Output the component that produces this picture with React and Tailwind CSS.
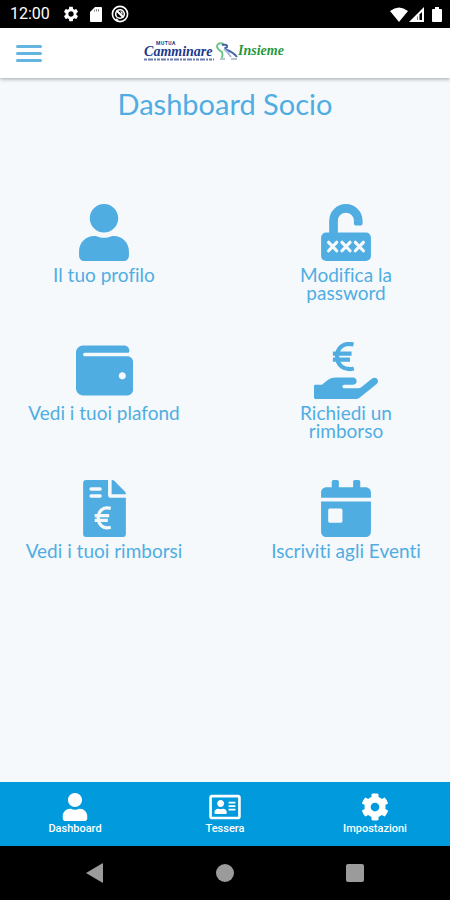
import { FaUser, FaWallet, FaCalendarDay, FaRegAddressCard, FaCog } from "react-icons/fa";
import { MdSettings } from "react-icons/md";

function UnlockPassword() {
  return (
    <svg viewBox="0 0 448 512" className="h-[57px] w-[50px]" aria-hidden="true">
      <path d="M112 280V150a111 111 0 0 1 222 0" fill="none" stroke="currentColor" strokeWidth="78" />
      <path d="M295 145h78v25q0 24-24 24h-30q-24 0-24-24z" fill="currentColor" />
      <rect y="256" width="448" height="256" rx="46" fill="currentColor" />
      <path
        d="M68 344l72 76m0-76l-72 76M188 344l72 76m0-76l-72 76M308 344l72 76m0-76l-72 76"
        stroke="#f5f9fc"
        strokeWidth="29"
        strokeLinecap="round"
      />
    </svg>
  );
}

function HandHoldingEuro() {
  return (
    <svg viewBox="0 0 576 512" className="h-[57px] w-16" aria-hidden="true" fill="currentColor">
      <path d="M565.3 328.1c-11.8-10.7-30.2-10-42.6 0L430.3 402c-11.3 9.1-25.4 14-40 14H272c-8.8 0-16-7.2-16-16s7.2-16 16-16h78.3c15.9 0 30.7-10.9 33.3-26.6 3.3-20-12.1-37.4-31.6-37.4H192c-27 0-53.1 9.3-74.1 26.3L71.4 384H12c-6 0-12 6-12 12v104c0 6 6 12 12 12h360.8c14.5 0 28.6-4.9 40-14L564 377c15.2-12.1 16.4-35.3 1.3-48.9z" />
      <path
        d="M356 22C264 0 208 54 208 130s60 130 150 108M170 104h168M170 158h154"
        fill="none"
        stroke="currentColor"
        strokeWidth="38"
      />
    </svg>
  );
}

function InvoiceEuro() {
  return (
    <svg viewBox="0 0 384 512" className="h-[57px] w-[43px]" aria-hidden="true" fill="currentColor">
      <path d="M24 0h200v136c0 13 11 24 24 24h136v328c0 13-11 24-24 24H24c-13 0-24-11-24-24V24C0 11 11 0 24 0z" />
      <path d="M256 0h6c7 0 13 3 17 7l98 98c4 4 7 10 7 17v6H256z" />
      <path d="M72 80h80M72 144h80" stroke="#f5f9fc" strokeWidth="32" strokeLinecap="round" />
      <path
        d="M248 255c-68-20-112 22-112 85s44 103 112 85M104 320h130M104 362h118"
        fill="none"
        stroke="#f5f9fc"
        strokeWidth="29"
      />
    </svg>
  );
}

const tiles = [
  { icon: <FaUser className="h-[57px] w-[50px]" />, lines: ["Il tuo profilo"] },
  { icon: <UnlockPassword />, lines: ["Modifica la", "password"] },
  { icon: <FaWallet className="size-[57px]" />, lines: ["Vedi i tuoi plafond"] },
  { icon: <HandHoldingEuro />, lines: ["Richiedi un", "rimborso"] },
  { icon: <InvoiceEuro />, lines: ["Vedi i tuoi rimborsi"] },
  { icon: <FaCalendarDay className="h-[57px] w-[50px]" />, lines: ["Iscriviti agli Eventi"] },
];

const tabs = [
  { icon: <FaUser className="size-7" />, label: "Dashboard" },
  { icon: <FaRegAddressCard className="h-7 w-8" />, label: "Tessera" },
  { icon: <FaCog className="size-7" />, label: "Impostazioni" },
];

function StatusBar() {
  return (
    <div className="flex h-7 shrink-0 items-center bg-black pr-2 pl-[10px] text-white">
      <span className="font-[Roboto,sans-serif] text-base">12:00</span>
      <MdSettings className="ml-3 size-[18px]" aria-hidden="true" />
      <svg viewBox="0 0 12 15" className="ml-[10px] h-[15px] w-3" fill="currentColor" aria-hidden="true">
        <path d="M5 0h6a1 1 0 0 1 1 1v13a1 1 0 0 1-1 1H1a1 1 0 0 1-1-1V5z" />
        <path d="M4.5 2.5v2M6.500 2v2.500M8.500 2v2.500" stroke="#888" strokeWidth="1" />
      </svg>
      <svg viewBox="0 0 18 18" className="ml-[9px] size-[18px]" fill="none" stroke="currentColor" aria-hidden="true">
        <circle cx="9" cy="9" r="7.6" strokeWidth="1.6" />
        <circle cx="9" cy="9" r="4.3" strokeWidth="1.6" />
        <path d="M5.5 5.5l7 7M5 14l2 2" strokeWidth="2" />
        <path d="M9 6.5h2.5V10z" fill="currentColor" stroke="none" />
      </svg>
      <svg viewBox="0 0 18 15" className="ml-auto h-[15px] w-[18px]" fill="currentColor" aria-hidden="true">
        <path d="M9 15L0 4q9-7 18 0z" />
      </svg>
      <svg viewBox="0 0 15 15" className="ml-px h-[15px] w-[15px]" aria-hidden="true">
        <path d="M15 0v15H0z" fill="currentColor" />
        <path d="M13 5v8H8V10z" fill="#000" />
        <path d="M9.500 8v6" stroke="#fff" strokeWidth="2" />
      </svg>
      <svg viewBox="0 0 10 15" className="ml-2 h-[15px] w-[10px]" fill="currentColor" aria-hidden="true">
        <path d="M3 0h4v2h2q1 0 1 1v11q0 1-1 1H1q-1 0-1-1V3q0-1 1-1h2z" />
      </svg>
    </div>
  );
}

function Logo() {
  return (
    <div className="flex items-center">
      <div className="flex w-[70px] flex-col text-[#20388a]">
        <span className="pl-3 font-[Roboto,sans-serif] text-[5px] leading-[5px] font-bold tracking-widest">MUTUA</span>
        <span className="font-['Liberation_Serif',serif] text-[14px] leading-3 font-bold italic">Camminare</span>
        <svg viewBox="0 0 70 3" className="h-[3px] w-[70px]" aria-hidden="true">
          <path d="M0 1.500h70" stroke="currentColor" strokeWidth="2" strokeDasharray="3 1 5 1 2 1" opacity=".65" />
        </svg>
      </div>
      <svg viewBox="0 0 24 20" className="h-5 w-6" fill="none" aria-hidden="true">
        <path d="M10 3Q4 1 3 5Q3 8 8 11Q9 14 8 17" stroke="#6fc487" strokeWidth="2" />
        <path d="M8 4Q14 3 13 6Q9 7 13 9Q19 11 23 16" stroke="#4967a8" strokeWidth="2" />
        <path d="M10 8Q14 11 17 16" stroke="#a9badb" strokeWidth="2" />
        <path d="M6 18h5m6 0h6" stroke="#b9c6cd" strokeWidth="2" />
      </svg>
      <span className="font-['Liberation_Serif',serif] text-[14px] leading-4 font-bold text-[#28973c] italic">
        Insieme
      </span>
    </div>
  );
}

export default function App() {
  return (
    <div className="flex min-h-screen flex-col bg-[#f5f9fc] font-[Lato,sans-serif] text-[#50ade2] [font-variant-ligatures:none]">
      <StatusBar />
      <header className="grid h-[50px] shrink-0 grid-cols-[1fr_auto_1fr] items-center bg-white px-4 shadow-[0_1px_4px_rgba(0,0,0,0.35)]">
        <button type="button" aria-label="Menu" className="flex w-[26px] flex-col gap-1">
          <span className="h-[3px] rounded-full bg-[#65b5e2]" />
          <span className="h-[3px] rounded-full bg-[#65b5e2]" />
          <span className="h-[3px] rounded-full bg-[#65b5e2]" />
        </button>
        <div className="pr-[22px] pb-1">
          <Logo />
        </div>
      </header>
      <main className="flex-1">
        <h1 className="pt-2 text-center text-[29px] leading-9 font-normal">Dashboard Socio</h1>
        <div className="mt-[82px] grid grid-cols-[160px_160px] justify-between gap-y-[38px] px-6">
          {tiles.map((tile) => (
            <button
              type="button"
              key={tile.lines[0]}
              className="flex min-h-[100px] flex-col items-center justify-start gap-[5px] text-[19px] leading-[18px]"
            >
              {tile.icon}
              <span className="flex flex-col whitespace-nowrap">
                {tile.lines.map((line) => (
                  <span key={line}>{line}</span>
                ))}
              </span>
            </button>
          ))}
        </div>
      </main>
      <nav className="grid h-16 shrink-0 grid-cols-3 bg-[#009add] text-white">
        {tabs.map((tab) => (
          <button
            type="button"
            key={tab.label}
            className="flex flex-col items-center justify-start pt-[11px] font-[Roboto,sans-serif] text-[11px] leading-4 font-medium"
          >
            {tab.icon}
            {tab.label}
          </button>
        ))}
      </nav>
      <div className="grid h-[54px] shrink-0 grid-cols-3 place-items-center bg-black px-[30px] text-[#9b9b9b]">
        <button type="button" aria-label="Indietro">
          <svg viewBox="0 0 18 20" className="h-5 w-[18px]" fill="currentColor">
            <path d="M0 10L16 .5q1-.5 1 .5v18q0 1-1 .5z" />
          </svg>
        </button>
        <button type="button" aria-label="Home" className="size-[18px] rounded-full bg-current" />
        <button type="button" aria-label="Recenti" className="size-[18px] rounded-xs bg-current" />
      </div>
    </div>
  );
}
